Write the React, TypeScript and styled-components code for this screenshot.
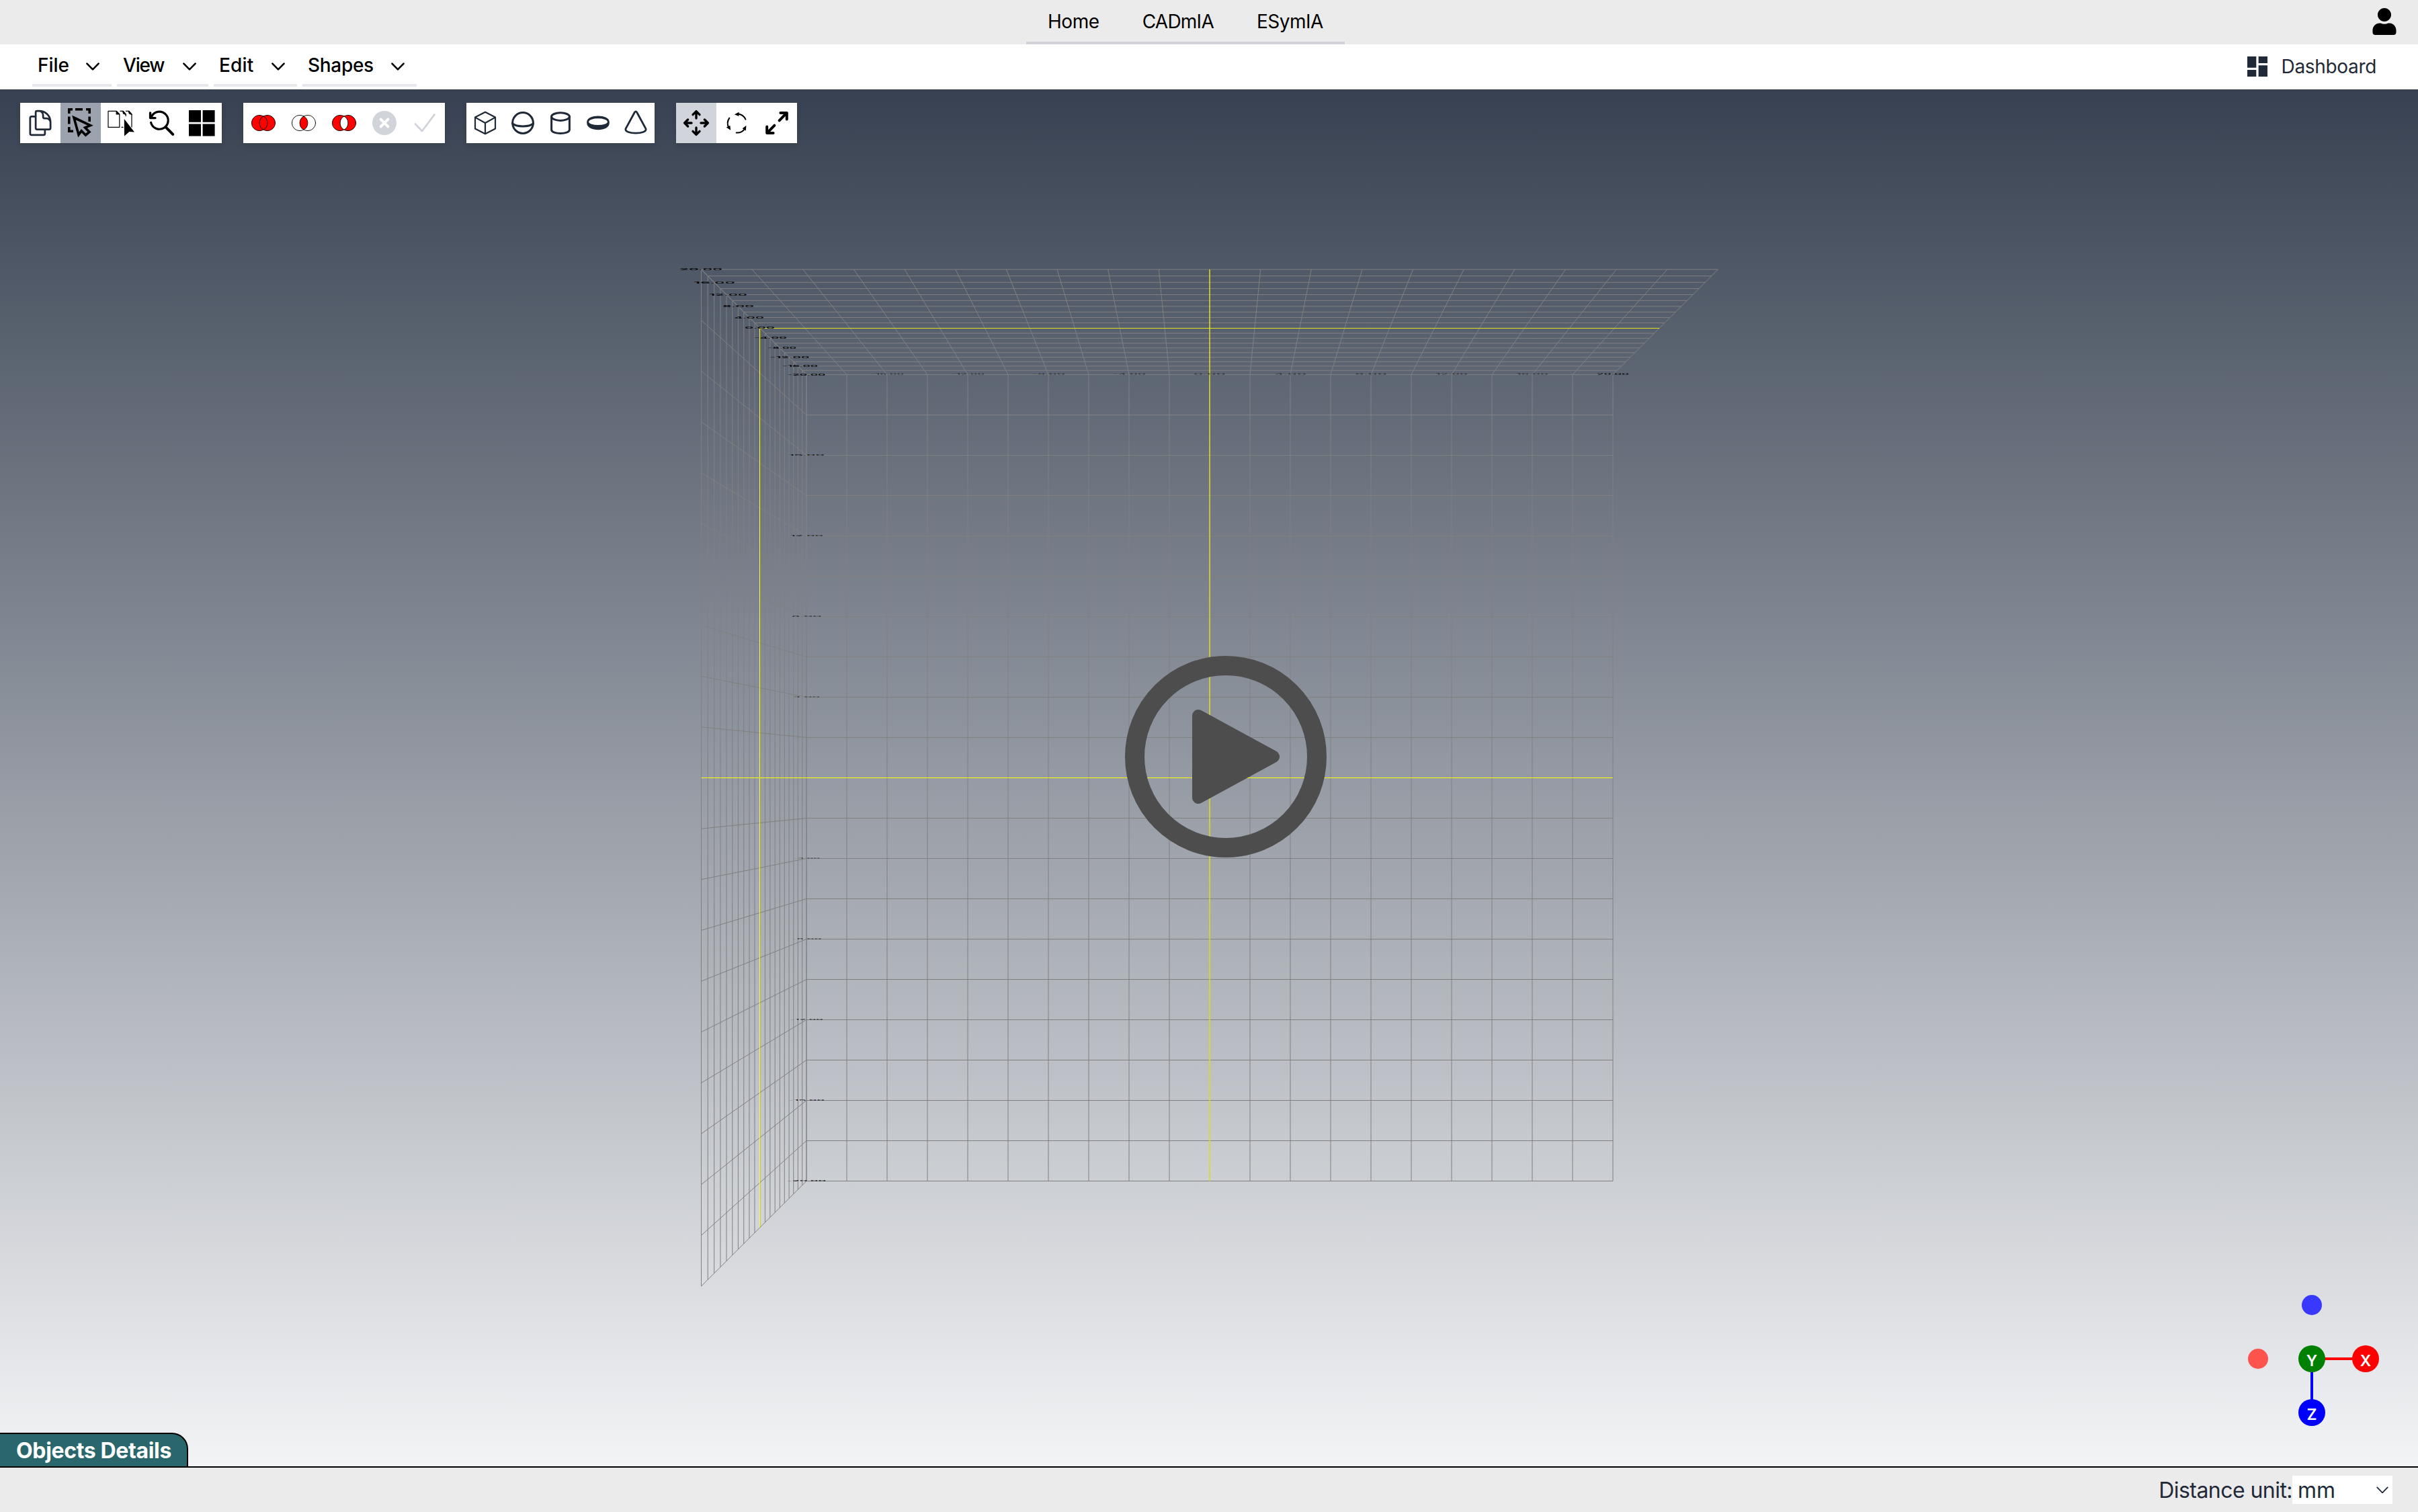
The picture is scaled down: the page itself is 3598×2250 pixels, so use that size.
import React from 'react';
import styled, { createGlobalStyle } from 'styled-components';
import { FaUser } from 'react-icons/fa';
import { MdDashboard } from 'react-icons/md';

const INK = '#1f2937';
const MUTED = '#d1d5db';
const LINE = '#808080';
const FONT = "Inter, 'Liberation Sans', sans-serif";

const GlobalStyle = createGlobalStyle`
  *, *::before, *::after { box-sizing: border-box; }
  body { margin: 0; font-family: ${FONT}; overflow: hidden; }
  svg { display: block; flex: none; }
`;

const Page = styled.div`
  display: flex;
  flex-direction: column;
  width: 3598px;
  height: 2250px;
  background: #fff;
`;

const TopBar = styled.header`
  display: flex;
  justify-content: space-between;
  height: 66px;
  padding: 0 30px 0 1527px;
  background: #ebebeb;
`;

const Tabs = styled.nav`
  display: flex;
  width: 474px;
  padding-top: 2px;
  border-bottom: 4px solid #d1d2d8;
`;

const Tab = styled.span<{ $track: number }>`
  display: flex;
  align-items: center;
  padding: 0 32px;
  font-size: 28px;
  letter-spacing: ${(p) => p.$track}px;
  color: #000;
`;

const Account = styled.div`
  display: flex;
  padding-top: 12px;
  height: 52px;
  color: #000;
`;

const MenuBar = styled.div`
  display: flex;
  justify-content: space-between;
  height: 67px;
  padding: 0 62px 0 48px;
`;

const Menus = styled.div`
  display: flex;
  gap: 8px;
`;

const MenuItem = styled.div<{ $width: number; $track: number; $inset?: number }>`
  display: flex;
  align-items: center;
  justify-content: space-between;
  width: ${(p) => p.$width}px;
  height: 63px;
  padding: 3px 18px 0 ${(p) => p.$inset ?? 8}px;
  border-bottom: 4px solid #e5e7eb;
  font-size: 28px;
  font-weight: 500;
  letter-spacing: ${(p) => p.$track}px;
  color: #000;

  svg { margin-top: 4px; }
`;

const DashboardLink = styled.div`
  display: flex;
  align-items: center;
  gap: 16px;
  padding-bottom: 1px;
  font-size: 28px;
  letter-spacing: -0.33px;
  color: ${INK};
`;

const Viewport = styled.main`
  position: relative;
  display: flex;
  flex-direction: column;
  justify-content: space-between;
  height: 2051px;
  border-bottom: 2px solid #000;
  background: linear-gradient(to bottom, #374151, #f3f4f6);
`;

const Scene = styled.svg`
  position: absolute;
  left: 0;
  top: 0;
`;

const Toolbars = styled.div`
  position: relative;
  display: flex;
  gap: 32px;
  padding: 20px 30px;
`;

const Toolbar = styled.div`
  display: flex;
  background: #fff;
  box-shadow: 0 4px 8px rgba(0, 0, 0, 0.12);
`;

const Tool = styled.div<{ $width?: number; $bg?: string }>`
  display: flex;
  align-items: center;
  justify-content: center;
  width: ${(p) => p.$width ?? 60}px;
  height: 60px;
  background: ${(p) => p.$bg ?? 'transparent'};
`;

const PlayOverlay = styled.svg`
  position: absolute;
  left: 1674px;
  top: 843px;
`;

const Gizmo = styled.svg`
  position: absolute;
  left: 3330px;
  top: 1779px;
`;

const DetailsTab = styled.div`
  position: relative;
  display: flex;
  align-items: center;
  align-self: flex-start;
  width: 280px;
  height: 50px;
  padding-left: 24px;
  border: 2px solid #000;
  border-left: 0;
  border-bottom: 0;
  border-top-right-radius: 24px;
  background: #2a676d;
  color: #fff;
  font-size: 32px;
  font-weight: 650;
  letter-spacing: -0.35px;
  white-space: nowrap;
`;

const Footer = styled.footer`
  display: flex;
  align-items: center;
  justify-content: flex-end;
  height: 66px;
  padding-right: 38px;
  background: #ebebeb;
  color: ${INK};
  font-size: 32px;
`;

const FooterLabel = styled.span`
  letter-spacing: -0.55px;
`;

const UnitSelect = styled.div`
  display: flex;
  align-items: center;
  justify-content: space-between;
  width: 149px;
  height: 42px;
  padding: 0 6px 0 8px;
  background: #fff;
`;

const Chevron = ({ size = 20, weight = 2.6 }: { size?: number; weight?: number }) => (
  <svg width={size} height={(size * 12) / 20} viewBox="0 0 20 12" fill="none" stroke="currentColor" strokeWidth={weight} strokeLinecap="round" strokeLinejoin="round">
    <path d="M1.4 1.6 L10 10.4 L18.6 1.6" />
  </svg>
);

const Icon = ({ children, color = '#000', width = 60 }: { children: React.ReactNode; color?: string; width?: number }) => (
  <svg width={width} height={60} viewBox={`${-width / 2} -30 ${width} 60`} fill="none" stroke={color} strokeLinecap="round" strokeLinejoin="round">
    {children}
  </svg>
);

const CopyIcon = () => (
  <svg width={44} height={44} viewBox="0 0 24 24" fill="none" stroke={INK} strokeWidth={1.5} strokeLinecap="round" strokeLinejoin="round">
    <path d="M15.75 17.25v3.375c0 .621-.504 1.125-1.125 1.125h-9.75a1.125 1.125 0 0 1-1.125-1.125V7.875c0-.621.504-1.125 1.125-1.125H6.75a9.06 9.06 0 0 1 1.5.124m7.5 10.376h3.375c.621 0 1.125-.504 1.125-1.125V11.25c0-4.46-3.243-8.161-7.5-8.876a9.06 9.06 0 0 0-1.5-.124H9.375c-.621 0-1.125.504-1.125 1.125v3.5m7.5 10.375H9.375a1.125 1.125 0 0 1-1.125-1.125v-9.25m12 6.625v-1.875a3.375 3.375 0 0 0-3.375-3.375h-1.5a1.125 1.125 0 0 1-1.125-1.125v-1.5a3.375 3.375 0 0 0-3.375-3.375H9.75" />
  </svg>
);

const SelectIcon = () => (
  <Icon>
    <g strokeWidth={3.6} strokeLinecap="butt" strokeLinejoin="miter">
      <path d="M-17.2 -14 V-20.2 H-12 M-8 -20.2 H3 M8 -20.2 H13.2 V-14 M-17.2 -9.5 V1.5 M-17.2 6 V12.2 H-11 M13.2 -9.5 V-2" />
      <path d="M-10 -8 L14.4 3.6 L6.6 6.8 L13 13.4 L7.4 18 L1.2 11.8 L-3 17.4 Z" fill="#9ca3af" strokeWidth={3.6} />
    </g>
  </Icon>
);

const MultiSelectIcon = () => (
  <Icon>
    <g strokeWidth={1.2} strokeLinecap="butt">
      <path d="M-6.5 -17.6 H-19 V6.4 H-2.2 V-12.6 L-6.5 -17.6 M-1.5 -17.6 H3.5 L7.2 -13 V-10 M0.5 6.4 H3.5 M7 -17.6 H12 L16 -13 V6.4" />
      <path d="M-6.8 -17.6 V-13 H-2.2 Z M2.6 -17.6 L7.2 -12.6 L3.6 -14 Z M11.2 -17.6 L16 -12.6 L12.4 -14 Z" fill="#000" />
      <path d="M4.8 -6 L20 13.4 L12.4 13 L5 19.6 Z" fill="#000" stroke="none" />
    </g>
  </Icon>
);

const ZoomResetIcon = () => (
  <Icon>
    <path d="M-14.5 -9.5 A13 13 0 1 1 -15.4 -0.6" strokeWidth={3.2} />
    <path d="M-16.4 -15 V-7.4 H-9" strokeWidth={3.4} />
    <path d="M6.8 6.4 L17.2 16.8" strokeWidth={4} />
  </Icon>
);

const WindowsIcon = () => (
  <Icon>
    <path d="M-19 -19 H-1 V-1.2 H-19 Z M1.6 -19 H19.6 V-1.2 H1.6 Z M-19 1.4 H-1 V19.4 H-19 Z M1.6 1.4 H19.6 V19.4 H1.6 Z" fill="#000" stroke="none" />
  </Icon>
);

const LENS = 'M0 -10.1 A11.6 11.6 0 0 1 0 10.1 A11.6 11.6 0 0 1 0 -10.1 Z';

const BooleanIcon = ({ outer, inner }: { outer: string; inner: string }) => (
  <Icon>
    <g strokeWidth={0.9}>
      <circle cx={-6} cy={0} r={11.6} fill={outer} />
      <circle cx={6} cy={0} r={11.6} fill={outer} />
      <path d={LENS} fill={inner} />
    </g>
  </Icon>
);

const CancelIcon = () => (
  <Icon>
    <circle r={18} fill={MUTED} stroke="none" />
    <path d="M-5.4 -5.4 L5.4 5.4 M5.4 -5.4 L-5.4 5.4" stroke="#fff" strokeWidth={3.8} />
  </Icon>
);

const CheckIcon = () => (
  <Icon color={MUTED}>
    <path d="M-14 1.6 L-4 12 L14.4 -12.4" strokeWidth={2.8} />
  </Icon>
);

const CubeIcon = () => (
  <Icon color={INK} width={56}>
    <path d="M0 -16.2 L15 -8.4 V8.4 L0 16.2 L-15 8.4 V-8.4 Z M-15 -8.4 L0 0 L15 -8.4 M0 0 V16.2" strokeWidth={2.2} />
  </Icon>
);

const SphereIcon = () => (
  <Icon color={INK} width={56}>
    <circle r={15.4} strokeWidth={3} />
    <path d="M-15.4 1 C-9 6.2 9 6.2 15.4 1" strokeWidth={3} />
  </Icon>
);

const CylinderIcon = () => (
  <Icon color={INK} width={56}>
    <g strokeWidth={3}>
      <ellipse cx={0} cy={-9.4} rx={13.4} ry={5.8} />
      <path d="M-13.4 -9.4 V10 C-13.4 17.2 13.4 17.2 13.4 10 V-9.4" />
    </g>
  </Icon>
);

const TorusIcon = () => (
  <Icon color={INK} width={56}>
    <path d="M-16.8 -1.6 C-16.8 -13.6 16.8 -13.6 16.8 -1.6 V0 C16.8 13.6 -16.8 13.6 -16.8 0 Z" fill={INK} stroke="none" />
    <ellipse cx={0} cy={-1.8} rx={13.8} ry={4.9} fill="#fff" stroke="none" />
  </Icon>
);

const ConeIcon = () => (
  <Icon color={INK} width={56}>
    <path d="M-1.6 -16 L-15 8.6 C-17.6 17.4 17.6 17.4 15 8.6 L1.6 -16 Q0 -18.4 -1.6 -16 Z" strokeWidth={2.8} />
  </Icon>
);

const MoveIcon = () => (
  <Icon>
    {[0, 90, 180, 270].map((turn) => (
      <path key={turn} d="M0 -7 V-17 M-5 -12.4 L0 -17.4 L5 -12.4" strokeWidth={3.4} transform={`rotate(${turn})`} />
    ))}
  </Icon>
);

const RotateIcon = () => (
  <Icon>
    {[0, 120, 240].map((turn) => (
      <g key={turn} transform={`translate(0.8 0.6) rotate(${turn})`}>
        <path d="M1 -14 A14 14 0 0 1 12.6 -6" strokeWidth={2} />
        <path d="M-4 -13.4 L3 -16.8 L2.6 -10.6 Z" fill="#000" stroke="none" />
      </g>
    ))}
  </Icon>
);

const ScaleIcon = () => (
  <Icon>
    <g strokeWidth={4}>
      <path d="M3.6 -3.6 L14 -14.4 M5.4 -15 H14.8 V-5.6" />
      <path d="M-3.6 3.6 L-14 14.4 M-5.4 15 H-14.8 V5.6" />
    </g>
  </Icon>
);

/* One-point perspective: a 20x20 back wall seen with its side wall and ceiling. */
const CX = 1800;
const CY = 1024.5;
const STEP = 60;
const DISTANCE = 96.67;
const steps = Array.from({ length: 21 }, (_, i) => i);
const scaleAt = (z: number) => DISTANCE / (DISTANCE - z);
const px = (u: number, z: number) => CX + u * STEP * scaleAt(z);
const py = (v: number, z: number) => CY + v * STEP * scaleAt(z);

type TickProps = { x: number; y: number; width: number; height: number; text: string; opacity?: number };

const Tick = ({ x, y, width, height, text, opacity = 0.95 }: TickProps) => (
  <text
    transform={`translate(${x} ${y + height / 2}) scale(1 ${height / 17})`}
    textAnchor="middle"
    textLength={width}
    lengthAdjust="spacingAndGlyphs"
    fontSize={24}
    fontWeight={600}
    fontFamily={FONT}
    fill="#000"
    fillOpacity={opacity}
    stroke="none"
  >
    {text}
  </text>
);

const depthTicks = [
  [1043, 400.8, 64, '20.00'],
  [1063, 420.2, 62, '16.00'],
  [1083.5, 438.5, 57, '12.00'],
  [1098.5, 455.8, 47, '8.00'],
  [1114.5, 472.3, 45, '4.00'],
  [1130.5, 488, 45, '0.00'],
  [1146.5, 503, 49, '-4.00'],
  [1163.5, 517.5, 43, '-8.00'],
  [1175, 531.4, 59, '-12.00'],
  [1190.5, 544.7, 53, '-16.00'],
  [1200, 557.2, 57, '-20.00'],
] as const;

const GridScene = () => (
  <Scene width={3598} height={2049} viewBox="0 0 3598 2049" fill="none" stroke={LINE} strokeWidth={1}>
    {steps.map((i) => (
      <g key={i}>
        <line x1={px(i - 10, 0)} y1={py(-10, 0)} x2={px(i - 10, 0)} y2={py(10, 0)} />
        <line x1={px(-10, 0)} y1={py(i - 10, 0)} x2={px(10, 0)} y2={py(i - 10, 0)} />
        <line x1={px(-10, i)} y1={py(-10, i)} x2={px(-10, i)} y2={py(10, i)} />
        <line x1={px(-10, i)} y1={py(-10, i)} x2={px(10, i)} y2={py(-10, i)} />
        <line x1={px(-10, 0)} y1={py(i - 10, 0)} x2={px(-10, 20)} y2={py(i - 10, 20)} />
        <line x1={px(i - 10, 0)} y1={py(-10, 0)} x2={px(i - 10, 20)} y2={py(-10, 20)} />
      </g>
    ))}
    <g stroke="#ffff00">
      <line x1={1130.5} y1={py(-10, 10)} x2={1130.5} y2={py(10, 10)} />
      <line x1={px(-10, 10)} y1={355.5} x2={px(10, 10)} y2={355.5} stroke="#dcdc20" />
      <line x1={px(-10, 20)} y1={CY} x2={px(10, 0)} y2={CY} />
      <line x1={CX} y1={py(-10, 20)} x2={CX} y2={py(10, 0)} strokeWidth={2} strokeOpacity={0.55} />
    </g>
    {depthTicks.map(([x, y, width, text]) => (
      <Tick key={text} x={x} y={y - 133} width={width} height={2.8} text={text} />
    ))}
    {[-16, -12, -8, -4, 0, 4, 8, 12, 16, 20].map((v) => (
      <Tick key={v} x={CX + v * 30} y={424.3} width={v < 0 ? 50 : 48} height={2.2} text={`${v}.00`} opacity={v === 20 ? 0.75 : 0.4} />
    ))}
    {[-16, -12, -8, -4, 4, 8, 12, 16, 20].map((v) => (
      <Tick key={v} x={1200} y={CY + v * 30} width={58 - (20 - Math.abs(v)) * 1.1} height={1.3} text={`${-v}.00`} opacity={0.35 + Math.abs(v) / 36} />
    ))}
  </Scene>
);

const AxisBall = ({ x, y, color, label }: { x: number; y: number; color: string; label: string }) => (
  <>
    <circle cx={x} cy={y} r={20} fill={color} />
    <text x={x} y={y + 11.4} textAnchor="middle" fontSize={23} fontWeight={600} fontFamily={FONT} fill="#fff">{label}</text>
  </>
);

export default function App() {
  return (
    <Page>
      <GlobalStyle />
      <TopBar>
        <Tabs>
          <Tab $track={-0.45}>Home</Tab>
          <Tab $track={-0.75}>CADmIA</Tab>
          <Tab $track={-0.5}>ESymIA</Tab>
        </Tabs>
        <Account><FaUser size={40} /></Account>
      </TopBar>

      <MenuBar>
        <Menus>
          <MenuItem $width={118} $track={0}>File<Chevron /></MenuItem>
          <MenuItem $width={136} $track={-1.2} $inset={9}>View<Chevron /></MenuItem>
          <MenuItem $width={124} $track={0.2}>Edit<Chevron /></MenuItem>
          <MenuItem $width={170} $track={-0.3}>Shapes<Chevron /></MenuItem>
        </Menus>
        <DashboardLink><MdDashboard size={40} />Dashboard</DashboardLink>
      </MenuBar>

      <Viewport>
        <GridScene />
        <Toolbars>
          <Toolbar>
            <Tool><CopyIcon /></Tool>
            <Tool $bg="#9ca3af"><SelectIcon /></Tool>
            <Tool><MultiSelectIcon /></Tool>
            <Tool><ZoomResetIcon /></Tool>
            <Tool><WindowsIcon /></Tool>
          </Toolbar>
          <Toolbar>
            <Tool><BooleanIcon outer="#ff0000" inner="#ff0000" /></Tool>
            <Tool><BooleanIcon outer="#fff" inner="#ff0000" /></Tool>
            <Tool><BooleanIcon outer="#ff0000" inner="#fff" /></Tool>
            <Tool><CancelIcon /></Tool>
            <Tool><CheckIcon /></Tool>
          </Toolbar>
          <Toolbar>
            <Tool $width={56}><CubeIcon /></Tool>
            <Tool $width={56}><SphereIcon /></Tool>
            <Tool $width={56}><CylinderIcon /></Tool>
            <Tool $width={56}><TorusIcon /></Tool>
            <Tool $width={56}><ConeIcon /></Tool>
          </Toolbar>
          <Toolbar>
            <Tool $bg={MUTED}><MoveIcon /></Tool>
            <Tool><RotateIcon /></Tool>
            <Tool><ScaleIcon /></Tool>
          </Toolbar>
        </Toolbars>

        <PlayOverlay width={300} height={300} viewBox="-150 -150 300 300">
          <circle r={135.5} fill="none" stroke="#4d4d4d" strokeWidth={29} />
          <path d="M-41 -61 L71 0 L-41 61 Z" fill="#4d4d4d" stroke="#4d4d4d" strokeWidth={18} strokeLinejoin="round" />
        </PlayOverlay>

        <Gizmo width={220} height={220} viewBox="-110 -110 220 220">
          <circle cx={0} cy={-80} r={15} fill="#3838ff" />
          <circle cx={-80} cy={0} r={15} fill="#ff534e" />
          <path d="M0 0 H80" stroke="#ff0000" strokeWidth={4} />
          <path d="M0 0 V80" stroke="#0000ff" strokeWidth={4} />
          <AxisBall x={0} y={0} color="#008000" label="Y" />
          <AxisBall x={80} y={0} color="#ff0000" label="X" />
          <AxisBall x={0} y={80} color="#0000ff" label="Z" />
        </Gizmo>

        <DetailsTab>Objects Details</DetailsTab>
      </Viewport>

      <Footer>
        <FooterLabel>Distance unit:</FooterLabel>
        <UnitSelect>mm<Chevron size={18} weight={2} /></UnitSelect>
      </Footer>
    </Page>
  );
}
